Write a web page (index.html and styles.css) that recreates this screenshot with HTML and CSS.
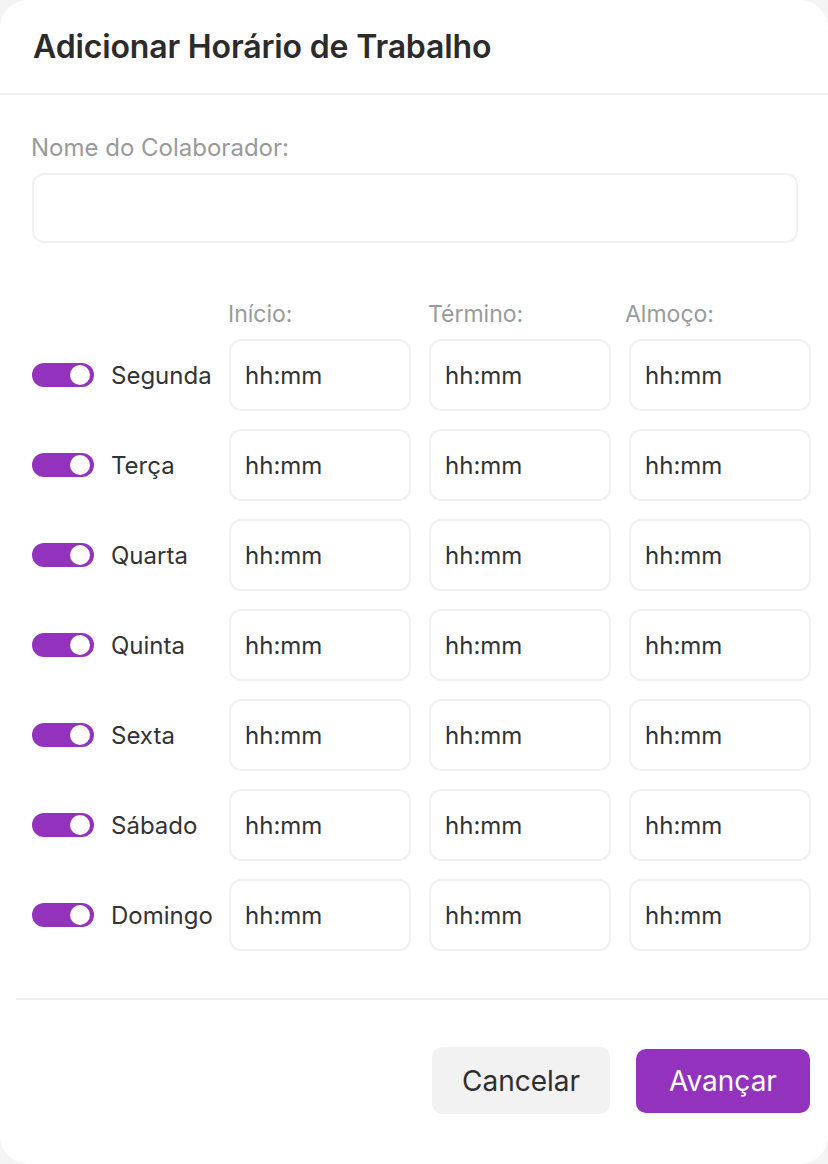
FILE: index.html
```html
<!DOCTYPE html>
<html lang="pt-BR">
<head>
<meta charset="utf-8">
<title>Adicionar Horário de Trabalho</title>
<link rel="stylesheet" href="styles.css">
</head>
<body>
<div class="modal">
  <header class="modal-header">
    <h1 class="title">Adicionar Horário de Trabalho</h1>
  </header>
  <main class="modal-body">
    <label class="field-label" for="nome">Nome do Colaborador:</label>
    <input class="name-input" id="nome" type="text">

    <div class="schedule-head">
      <div class="col-head empty"></div>
      <div class="col-head">Início:</div>
      <div class="col-head">Término:</div>
      <div class="col-head shift">Almoço:</div>
    </div>

    <div class="schedule">
      <div class="day"><span class="toggle"><span class="knob"></span></span><span class="day-name">Segunda</span></div>
      <div class="time">hh:mm</div><div class="time">hh:mm</div><div class="time">hh:mm</div>

      <div class="day"><span class="toggle"><span class="knob"></span></span><span class="day-name">Terça</span></div>
      <div class="time">hh:mm</div><div class="time">hh:mm</div><div class="time">hh:mm</div>

      <div class="day"><span class="toggle"><span class="knob"></span></span><span class="day-name">Quarta</span></div>
      <div class="time">hh:mm</div><div class="time">hh:mm</div><div class="time">hh:mm</div>

      <div class="day"><span class="toggle"><span class="knob"></span></span><span class="day-name">Quinta</span></div>
      <div class="time">hh:mm</div><div class="time">hh:mm</div><div class="time">hh:mm</div>

      <div class="day"><span class="toggle"><span class="knob"></span></span><span class="day-name">Sexta</span></div>
      <div class="time">hh:mm</div><div class="time">hh:mm</div><div class="time">hh:mm</div>

      <div class="day"><span class="toggle"><span class="knob"></span></span><span class="day-name">Sábado</span></div>
      <div class="time">hh:mm</div><div class="time">hh:mm</div><div class="time">hh:mm</div>

      <div class="day"><span class="toggle"><span class="knob"></span></span><span class="day-name">Domingo</span></div>
      <div class="time">hh:mm</div><div class="time">hh:mm</div><div class="time">hh:mm</div>
    </div>
  </main>
  <footer class="modal-footer">
    <button class="btn btn-cancel" type="button">Cancelar</button>
    <button class="btn btn-primary" type="button">Avançar</button>
  </footer>
</div>
</body>
</html>
```

FILE: styles.css
```css
* { box-sizing: border-box; }

html, body {
  margin: 0;
  padding: 0;
  background: #f4f4f4;
}

body {
  font-family: Inter, "Noto Sans", "Liberation Sans", sans-serif;
  color: #2e2e2e;
}

.modal {
  width: 828px;
  height: 1164px;
  background: #ffffff;
  border-radius: 28px;
  display: flex;
  flex-direction: column;
  overflow: hidden;
}

.modal-header {
  height: 95px;
  padding: 0 33px;
  display: flex;
  align-items: center;
  border-bottom: 2px solid #f1f1f1;
}

.title {
  margin: 0 0 1px 0;
  font-size: 32px;
  font-weight: 600;
  color: #2b2b2b;
  letter-spacing: -0.15px;
}

.modal-body {
  padding: 39px 17px 0 32px;
  display: flex;
  flex-direction: column;
}

.field-label {
  font-size: 24px;
  line-height: 28px;
  color: #9a9a9a;
  margin-left: -1px;
}

.name-input {
  margin-top: 11px;
  width: 766px;
  height: 70px;
  border: 2px solid #f1f1f1;
  border-radius: 12px;
  background: #fff;
  outline: none;
  font: inherit;
}

.schedule-head,
.schedule {
  display: grid;
  grid-template-columns: 179px 182px 182px 182px;
  column-gap: 18px;
}

.schedule-head {
  margin-top: 57px;
  margin-bottom: 11px;
}

.col-head {
  font-size: 23px;
  line-height: 28px;
  color: #9a9a9a;
  margin-left: -1px;
}

.col-head.shift {
  margin-left: -4px;
}

.schedule {
  grid-auto-rows: 72px;
  row-gap: 18px;
}

.day {
  display: flex;
  align-items: center;
  gap: 17px;
}

.toggle {
  width: 62px;
  height: 24px;
  border-radius: 12px;
  background: #9333bd;
  display: flex;
  align-items: center;
  justify-content: flex-end;
  padding-right: 4px;
  flex: none;
}

.knob {
  width: 20px;
  height: 20px;
  border-radius: 50%;
  background: #ffffff;
}

.day-name {
  font-size: 24px;
  color: #333333;
}

.time {
  border: 2px solid #f1f1f1;
  border-radius: 12px;
  display: flex;
  align-items: center;
  padding-left: 14px;
  font-size: 24px;
  color: #333333;
}

.modal-footer {
  margin: 47px 0 0 16px;
  border-top: 2px solid #f1f1f1;
  padding: 47px 18px 0 0;
  display: flex;
  justify-content: flex-end;
  align-items: center;
  gap: 26px;
}

.btn {
  font-family: inherit;
  font-size: 28px;
  border: none;
  border-radius: 10px;
  cursor: pointer;
}

.btn-cancel {
  width: 178px;
  height: 67px;
  background: #f2f2f2;
  color: #2e2e2e;
}

.btn-primary {
  width: 174px;
  height: 64px;
  background: #9333bd;
  color: #ffffff;
}
```
